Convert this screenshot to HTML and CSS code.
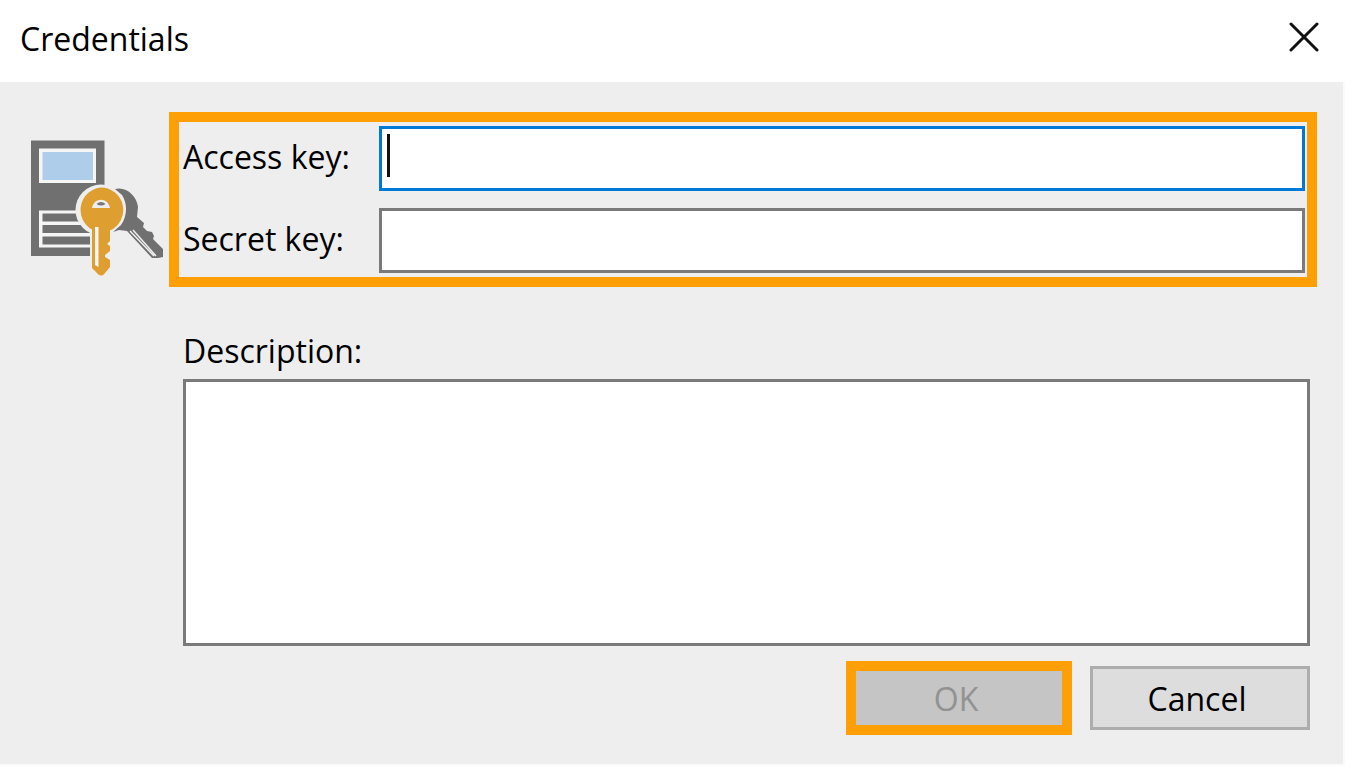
FILE: index.html
```html
<!DOCTYPE html>
<html lang="en">
<head>
<meta charset="utf-8">
<title>Credentials</title>
<link rel="stylesheet" href="styles.css">
</head>
<body>
<main class="dialog">
  <header class="titlebar">
    <h1 class="title">Credentials</h1>
    <button class="close" type="button" aria-label="Close">
      <svg width="30" height="30" viewBox="0 0 30 30" aria-hidden="true"><path d="M2 2 28 28M28 2 2 28" fill="none" stroke="#111" stroke-width="3" stroke-linecap="round"/></svg>
    </button>
  </header>
  <form class="content">
    <svg class="emblem" width="134" height="138" viewBox="30 139 134 138" aria-hidden="true">
      <path fill="#707070" d="M31 140.500H104.500V256H31Z"/>
      <path fill="#f5f5f5" d="M39 148.500H96V183H39ZM39 210.500H90V247.500H39Z"/>
      <path fill="#aecdea" d="M42.500 152H93V180H42.500Z"/>
      <path fill="#707070" d="M42.500 213.500H88V221.500H42.500ZM42.500 225H90V233H42.500ZM42.500 236.500H90V244.500H42.500Z"/>
      <circle cx="101" cy="210" r="25.500" fill="#eee"/>
      <path fill="#eee" d="M90 230H112V256H90Z"/>
      <path fill="#707070" d="M115 189C126 186 137 196 138 207L137 217L144 223L143 227L147 231L152 232L154 236L153 239L163 249V257L158 258L152 258L127 231L119 230L113 232L121 225C127 217 128 204 122 195Z"/>
      <path d="m130 231 24 25m-21-26 23 26" fill="none" stroke="#eee" stroke-width="1.500"/>
      <path fill="#df9e30" fill-rule="evenodd" d="M101 187.500A22.500 22.500 0 0 1 110 230.500V241L107 244L110 246V251L105 255V257L110 260V267L105 273C102 277 99 276 96 272L92 268V229.500A22.500 22.500 0 0 1 101 187.500ZM92 208H110C108 197 94 197 92 208Z"/>
      <path fill="#777" d="M96.500 204Q101 200 105.500 204Q101 207 96.500 204Z"/>
      <path fill="#f5f5f5" d="M95 227H98.500V267L95 265Z"/>
    </svg>
    <div class="main">
      <div class="keys">
        <label for="access">Access key:</label>
        <div class="field">
          <input class="box active" id="access" type="text">
          <span class="caret"></span>
        </div>
        <label for="secret">Secret key:</label>
        <input class="box" id="secret" type="password">
      </div>
      <div class="details">
        <label for="description">Description:</label>
        <textarea class="box notes" id="description"></textarea>
      </div>
      <div class="actions">
        <span class="highlight"><button class="button" type="submit" disabled>OK</button></span>
        <button class="button cancel" type="button">Cancel</button>
      </div>
    </div>
  </form>
</main>
</body>
</html>
```
FILE: styles.css
```css
* {
  box-sizing: border-box;
}

body {
  margin: 0;
  background: #fafafa;
  color: #000;
  font: 32px/44px "Open Sans", "Noto Sans", sans-serif;
}

.dialog {
  display: flex;
  flex-direction: column;
  min-height: 100vh;
  padding: 0 2px 2px 0;
}

.titlebar {
  display: flex;
  align-items: flex-start;
  justify-content: space-between;
  margin-right: -2px;
  padding: 17px 26px 21px 20px;
  background: #fff;
}

.title {
  margin: 0;
  font: inherit;
}

.close {
  display: flex;
  margin-top: 5px;
  padding: 0;
  border: 0;
  background: none;
}

.content {
  display: flex;
  flex: 1;
  gap: 5px;
  padding: 30px 26px 29px 30px;
  background: #eee;
}

.emblem {
  flex: none;
  margin-top: 27px;
}

.main {
  display: flex;
  flex: 1;
  flex-direction: column;
}

.keys {
  display: grid;
  grid-template-columns: 179px 1fr;
  align-items: center;
  gap: 17px;
  padding: 4px 2px 4px 4px;
  border: 10px solid #ff9f06;
}

.keys label {
  padding-bottom: 4px;
}

.field {
  position: relative;
  display: flex;
}

.box {
  width: 100%;
  height: 65px;
  padding: 4px 10px;
  border: 3px solid #7a7a7a;
  border-radius: 0;
  outline: 0;
  background: #fff;
  color: inherit;
  font: inherit;
}

.active {
  border-color: #0078d7;
}

.caret {
  position: absolute;
  top: 8px;
  left: 8px;
  width: 3px;
  height: 43px;
  background: #111;
}

.details {
  display: flex;
  flex: 1;
  flex-direction: column;
  margin: 42px 7px 15px 14px;
}

.notes {
  flex: 1;
  margin-top: 6px;
  resize: none;
}

.actions {
  display: flex;
  align-items: center;
  justify-content: flex-end;
  gap: 18px;
  margin-right: 7px;
}

.highlight {
  display: flex;
  border: 10px solid #ff9f06;
}

.button {
  width: 206px;
  height: 54px;
  padding: 2px 6px 0 0;
  border: 0;
  background: #c5c5c5;
  color: #000;
  font: inherit;
}

.button:disabled {
  color: #929292;
}

.cancel {
  width: 220px;
  height: 64px;
  border: 3px solid #adadad;
  background: #ddd;
}
```
